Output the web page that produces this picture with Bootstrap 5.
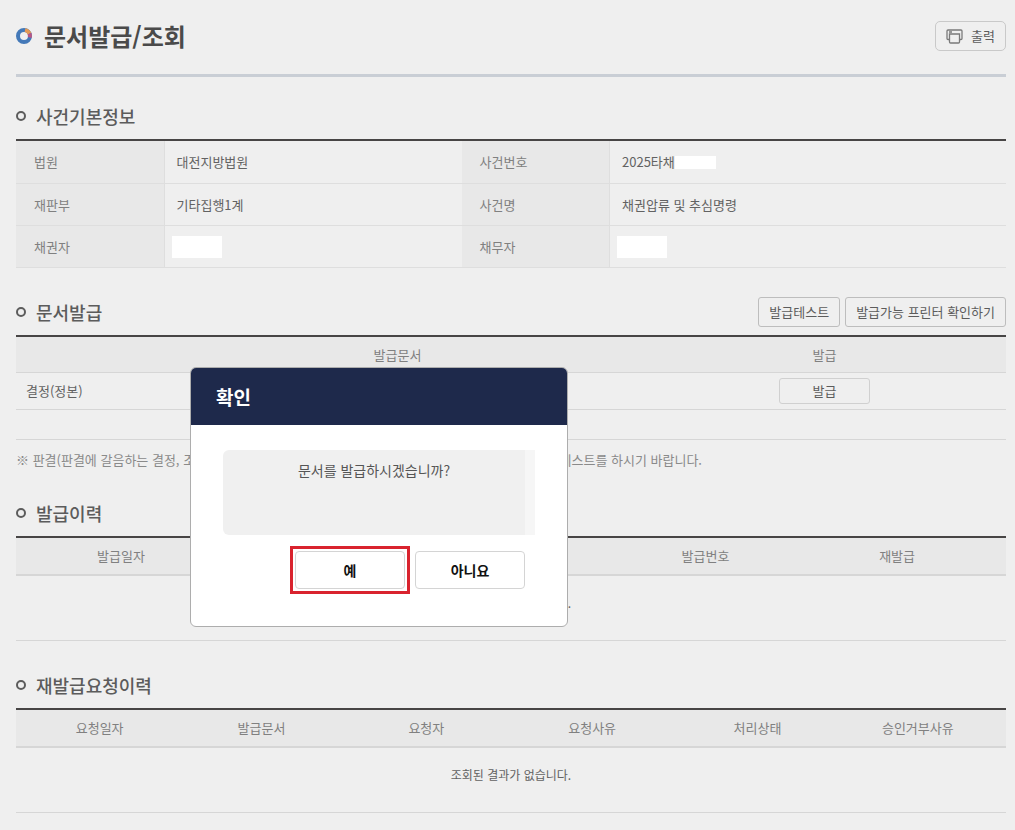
<!DOCTYPE html>
<html lang="ko">
<head>
<meta charset="utf-8">
<meta name="viewport" content="width=device-width, initial-scale=1">
<title>문서발급/조회</title>
<link href="https://cdn.jsdelivr.net/npm/bootstrap@5.3.0/dist/css/bootstrap.min.css" rel="stylesheet">
<style>
body{background:#efefef;color:#626262;font:13px/20px "Noto Sans CJK KR","Noto Sans KR",sans-serif;min-height:100vh}
.page-wrap{padding:0 9px 16px 16px}
.page-head{height:77px;padding-bottom:2px;border-bottom:3px solid #c9ced5}
.page-head h1{font-size:24px;line-height:36px;font-weight:700;color:#4a4a4a}
.sec{margin-bottom:21px}
.sec-head{height:46px;gap:10px}
.sec-head h2{font-size:18px;line-height:28px;font-weight:500;color:#5c5c5c}
.sec-tools{gap:5px}
.ring{width:10px;height:10px;border:2px solid #5c5c5c;border-radius:50%}
.grid-box{border-top:2px solid #474545}
.grid-box table{table-layout:fixed;border-collapse:separate;border-spacing:0;color:inherit;--bs-table-bg:transparent}
.grid-box th,.grid-box td{padding:0;border-bottom:1px solid #d6d6d6;color:inherit;vertical-align:middle}
.grid-box th{background:#e8e8e8;font-weight:400;color:#808080}
.info th,.info td{height:42px;border-color:#dedede}
.info tr:first-child>*{height:43px}
.info th{padding-left:18px;border-right:1px solid #dedede}
.info td{padding-left:12px}
.info .masked{padding-left:7px}
.issue thead th{height:36px}
.issue tbody td{height:37px}
.issue .spare td{height:30px}
.issue .doc{padding-left:10px}
.hist thead th{height:38px;border-bottom-width:2px}
.hist tbody td{height:65px;padding-bottom:10px;font-size:12px;text-align:center}
.mask-name{width:50px;height:22px;background:#fff}
.mask-no{width:41px;height:13px;background:#fff}
.btn-line{--bs-btn-font-size:13px;--bs-btn-line-height:20px;--bs-btn-padding-x:10px;--bs-btn-padding-y:4px;--bs-btn-color:#5c5c5c;--bs-btn-border-color:#bdbdbd;--bs-btn-border-radius:3px}
.btn-print{--bs-btn-border-color:#c9c9c9;--bs-btn-border-radius:5px}
.btn-issue{--bs-btn-padding-y:2px;--bs-btn-border-color:#d0d0d0}
.note{max-width:686px;margin:10px 0 20px;color:#8a8a8a}
.dialog{left:190px;top:367px;width:378px;border:1px solid #adadad;border-radius:6px;background:#fff;overflow:hidden}
.dialog-head{height:57px;padding:0 25px;background:#1e294b;color:#fff}
.dialog-head h2{font-size:19px;line-height:30px;font-weight:700}
.dialog-body{padding:25px 32px 32px}
.message{height:85px;padding-top:10px;background:#f0f0f0;border-right:10px solid #f6f6f6;border-radius:6px 0 0 6px;font-size:14px;color:#555}
.dialog-foot{gap:5px;padding:11px 10px 0 0}
.btn-answer{width:110px;--bs-btn-font-size:14px;--bs-btn-line-height:20px;--bs-btn-padding-y:8px;--bs-btn-font-weight:700;--bs-btn-color:#111;--bs-btn-border-color:#d4d4d4;--bs-btn-border-radius:4px}
.pick{padding:2px;border:3px solid #d9232e}
</style>
</head>
<body>
<main class="page-wrap position-relative">
  <header class="page-head d-flex align-items-center justify-content-between">
    <div class="d-flex align-items-center gap-2">
      <svg width="20" height="16" viewBox="0 0 20 16" aria-hidden="true">
        <g fill="none" stroke-width="4">
          <circle cx="8" cy="8" r="6" stroke="#4479b8"/>
          <path d="M9 2.1A6 6 0 0 1 13.5 5.6" stroke="#e59a55"/>
          <path d="M13.5 5.6A6 6 0 0 1 13.8 9.4" stroke="#b95683"/>
        </g>
      </svg>
      <h1 class="mb-0">문서발급/조회</h1>
    </div>
    <button type="button" class="btn btn-line btn-print d-flex align-items-center gap-2">
      <svg width="17" height="15" viewBox="0 0 17 15" fill="none" stroke="#7a7a7a" stroke-width="1.3" aria-hidden="true">
        <path d="M3 10.500H2Q1 10.500 1 9.500V2Q1 1 2 1h13q1 0 1 1v7.500q0 1-1 1h-1"/>
        <path d="M3.500 5h10v8q0 1-1 1h-8q-1 0-1-1zM3 3h3"/>
      </svg>
      출력
    </button>
  </header>

  <section class="sec mt-3">
    <div class="sec-head d-flex align-items-center"><span class="ring"></span><h2 class="mb-0">사건기본정보</h2></div>
    <div class="grid-box">
      <table class="table info mb-0">
        <colgroup><col style="width:15%"><col style="width:30%"><col style="width:15%"><col style="width:40%"></colgroup>
        <tbody>
          <tr><th scope="row">법원</th><td>대전지방법원</td><th scope="row">사건번호</th><td><div class="d-flex align-items-center">2025타채<span class="mask-no"></span></div></td></tr>
          <tr><th scope="row">재판부</th><td>기타집행1계</td><th scope="row">사건명</th><td>채권압류 및 추심명령</td></tr>
          <tr><th scope="row">채권자</th><td class="masked"><div class="mask-name"></div></td><th scope="row">채무자</th><td class="masked"><div class="mask-name"></div></td></tr>
        </tbody>
      </table>
    </div>
  </section>

  <section>
    <div class="sec-head d-flex align-items-center">
      <span class="ring"></span><h2 class="mb-0">문서발급</h2>
      <div class="sec-tools d-flex ms-auto">
        <button type="button" class="btn btn-line">발급테스트</button>
        <button type="button" class="btn btn-line">발급가능 프린터 확인하기</button>
      </div>
    </div>
    <div class="grid-box">
      <table class="table issue mb-0">
        <colgroup><col><col style="width:91px"><col style="width:136px"></colgroup>
        <thead><tr class="text-center"><th scope="col">발급문서</th><th scope="col">발급</th><th></th></tr></thead>
        <tbody>
          <tr><td class="doc">결정(정본)</td><td><button type="button" class="btn btn-line btn-issue w-100 d-block">발급</button></td><td></td></tr>
          <tr class="spare"><td colspan="3"></td></tr>
        </tbody>
      </table>
    </div>
    <p class="note d-flex justify-content-between"><span>※ 판결(판결에 갈음하는 결정, 조</span><span>테스트를 하시기 바랍니다.</span></p>
  </section>

  <section class="sec">
    <div class="sec-head d-flex align-items-center"><span class="ring"></span><h2 class="mb-0">발급이력</h2></div>
    <div class="grid-box">
      <table class="table hist mb-0">
        <colgroup><col style="width:21.2%"><col style="width:40.1%"><col style="width:16.7%"><col style="width:22%"></colgroup>
        <thead><tr class="text-center"><th scope="col">발급일자</th><th scope="col">발급문서</th><th scope="col">발급번호</th><th scope="col">재발급</th></tr></thead>
        <tbody><tr><td colspan="4">조회된 결과가 없습니다.</td></tr></tbody>
      </table>
    </div>
  </section>

  <section>
    <div class="sec-head d-flex align-items-center"><span class="ring"></span><h2 class="mb-0">재발급요청이력</h2></div>
    <div class="grid-box">
      <table class="table hist mb-0">
        <colgroup><col style="width:16.9%"><col style="width:15.8%"><col style="width:17.5%"><col style="width:16%"><col style="width:17.4%"><col style="width:15%"><col style="width:1.4%"></colgroup>
        <thead><tr class="text-center"><th scope="col">요청일자</th><th scope="col">발급문서</th><th scope="col">요청자</th><th scope="col">요청사유</th><th scope="col">처리상태</th><th scope="col">승인거부사유</th><th></th></tr></thead>
        <tbody><tr><td colspan="7">조회된 결과가 없습니다.</td></tr></tbody>
      </table>
    </div>
  </section>

  <div class="dialog position-absolute" role="dialog" aria-labelledby="dialog-title">
    <div class="dialog-head d-flex align-items-center"><h2 class="mb-0" id="dialog-title">확인</h2></div>
    <div class="dialog-body">
      <div class="message text-center">문서를 발급하시겠습니까?</div>
      <div class="dialog-foot d-flex justify-content-end align-items-center">
        <div class="pick"><button type="button" class="btn btn-answer d-block">예</button></div>
        <button type="button" class="btn btn-answer">아니요</button>
      </div>
    </div>
  </div>
</main>
<script src="https://cdn.jsdelivr.net/npm/bootstrap@5.3.0/dist/js/bootstrap.bundle.min.js"></script>
</body>
</html>
